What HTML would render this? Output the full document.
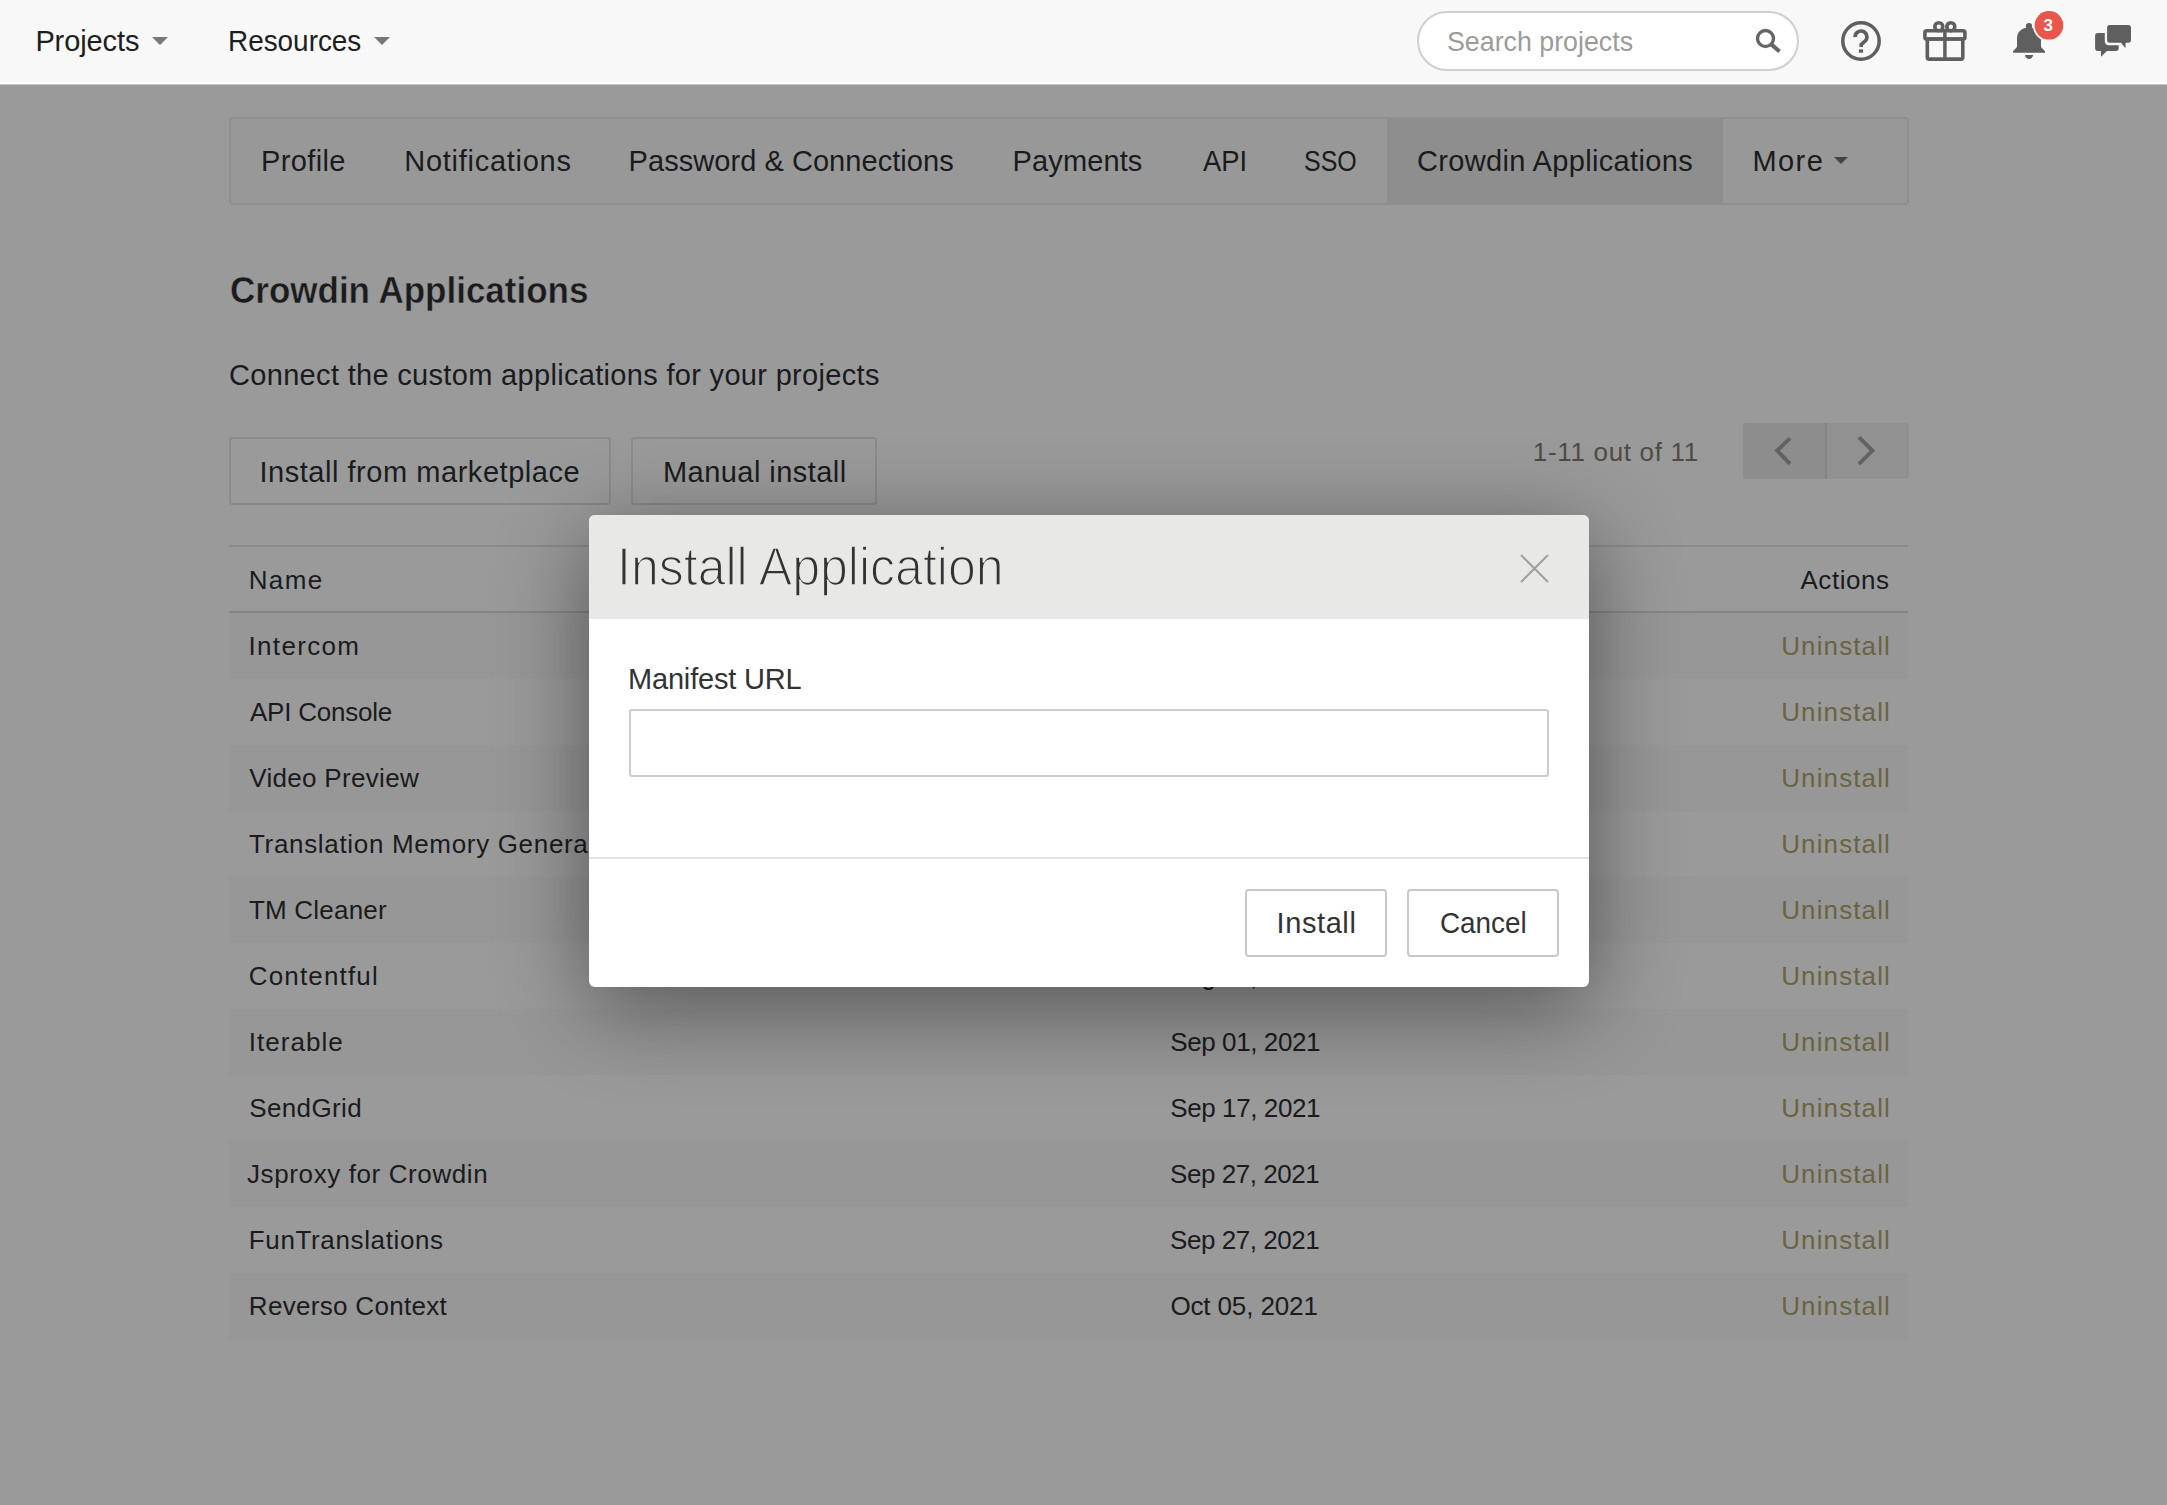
<!DOCTYPE html>
<html><head><meta charset="utf-8">
<style>
html,body{margin:0;padding:0}
body{width:2167px;height:1505px;overflow:hidden;position:relative;background:#9a9a9a;font-family:"Liberation Sans",sans-serif}
.t{position:absolute;white-space:nowrap;line-height:1;font-family:"Liberation Sans",sans-serif}
.b{position:absolute;box-sizing:border-box}
.tri{position:absolute;width:0;height:0;border-left:8px solid transparent;border-right:8px solid transparent;border-top:8px solid #777}
.row{position:absolute;left:229px;width:1679px;height:66px;background:#979797}
</style></head>
<body>
<!-- header -->
<div class="b" style="left:0;top:0;width:2167px;height:82px;background:#f8f8f8"></div>
<div class="b" style="left:0;top:82px;width:2167px;height:2px;background:#fefefe"></div>
<div class="b" style="left:0;top:84px;width:2167px;height:1px;background:#c4c4c4"></div>
<div class="tri" style="left:152px;top:37px"></div>
<div class="tri" style="left:374px;top:37px"></div>
<div class="b" style="left:1417px;top:11px;width:382px;height:60px;border:2px solid #cfcfcf;border-radius:30px;background:#fff"></div>
<svg style="position:absolute;left:1754px;top:27px" width="30" height="28" viewBox="0 0 30 28">
 <circle cx="11.5" cy="11.5" r="8" fill="none" stroke="#666" stroke-width="3.4"/>
 <line x1="17.5" y1="17.5" x2="25.5" y2="24.5" stroke="#666" stroke-width="4.2"/>
</svg>
<svg style="position:absolute;left:1838px;top:18px" width="46" height="46" viewBox="0 0 46 46">
 <circle cx="23" cy="23" r="18.2" fill="none" stroke="#5f5f5f" stroke-width="3.5"/>
 <path d="M17.1 19.2 A5.9 5.9 0 1 1 27.6 22.6 L23.2 26.6 L23.2 28.9" fill="none" stroke="#5f5f5f" stroke-width="3.6"/>
 <rect x="20.9" y="31.4" width="4.2" height="3.3" fill="#5f5f5f"/>
</svg>
<svg style="position:absolute;left:1920px;top:18px" width="50" height="46" viewBox="0 0 50 46">
 <circle cx="18.8" cy="8.7" r="4" fill="none" stroke="#5f5f5f" stroke-width="3.6"/>
 <circle cx="30.8" cy="8.7" r="4" fill="none" stroke="#5f5f5f" stroke-width="3.6"/>
 <rect x="4.9" y="12.8" width="40" height="8.2" rx="1.8" fill="none" stroke="#5f5f5f" stroke-width="3.6"/>
 <rect x="7.3" y="21" width="35.5" height="20.1" rx="1.8" fill="none" stroke="#5f5f5f" stroke-width="3.6"/>
 <line x1="24.9" y1="12" x2="24.9" y2="42" stroke="#5f5f5f" stroke-width="3.5"/>
</svg>
<svg style="position:absolute;left:2005px;top:5px" width="70" height="60" viewBox="0 0 70 60">
 <circle cx="24" cy="21.2" r="3.1" fill="#5f5f5f"/>
 <path d="M24 22.6 C17 22.6 12 26.8 12 33.5 L12 42 L8 46.3 L8 47.8 L40 47.8 L40 46.3 L36 42 L36 33.5 C36 26.8 31 22.6 24 22.6 Z" fill="#5f5f5f"/>
 <path d="M20 50 L28 50 C28 52.4 26.2 53.9 24 53.9 C21.8 53.9 20 52.4 20 50 Z" fill="#5f5f5f"/>
 <circle cx="44" cy="20.3" r="16.2" fill="#f8f8f8"/>
 <circle cx="44" cy="20.3" r="14.3" fill="#e9564b"/>
</svg>
<div class="t" style="left:2043.6px;top:17px;font-size:17px;font-weight:700;color:#fff">3</div>
<svg style="position:absolute;left:2092px;top:22px" width="42" height="38" viewBox="0 0 42 38">
 <path d="M17.6 3 L36.5 3 C37.9 3 39 4.1 39 5.5 L39 18.2 C39 19.6 37.9 20.7 36.5 20.7 L33.7 20.7 L33.4 26.2 L29 20.7 L17.6 20.7 C16.2 20.7 15.1 19.6 15.1 18.2 L15.1 5.5 C15.1 4.1 16.2 3 17.6 3 Z" fill="#5f5f5f"/>
 <path d="M5.6 11.1 L12.8 11.1 L12.8 19.5 C12.8 21.5 14.5 23.2 16.5 23.2 L26.7 23.2 L26.7 26.4 C26.7 27.8 25.6 28.9 24.2 28.9 L14.9 28.9 L9.1 34.7 L8.9 28.9 L5.6 28.9 C4.2 28.9 3.1 27.8 3.1 26.4 L3.1 13.6 C3.1 12.2 4.2 11.1 5.6 11.1 Z" fill="#5f5f5f"/>
</svg>

<!-- tabs -->
<div class="b" style="left:229px;top:117px;width:1680px;height:88px;border:2px solid #8f8f8f;border-radius:4px;background:#989898"></div>
<div class="b" style="left:1387px;top:119px;width:336px;height:84px;background:#8e8e8e"></div>
<div class="tri" style="left:1834px;top:157px;border-left-width:7px;border-right-width:7px;border-top-width:7px;border-top-color:#444"></div>

<!-- buttons -->
<div class="b" style="left:229px;top:437px;width:382px;height:68px;border:2px solid #8a8a8a;border-radius:3px"></div>
<div class="b" style="left:631px;top:437px;width:246px;height:68px;border:2px solid #8a8a8a;border-radius:3px"></div>

<!-- pagination -->
<div class="b" style="left:1743px;top:423px;width:83px;height:56px;background:#8d8d8d;border-radius:3px 0 0 3px"></div>
<div class="b" style="left:1826px;top:423px;width:83px;height:56px;background:#919191;border-radius:0 3px 3px 0"></div>
<div class="b" style="left:1825px;top:423px;width:2px;height:56px;background:#848484"></div>
<svg style="position:absolute;left:1770px;top:435px" width="26" height="32" viewBox="0 0 26 32">
 <polyline points="20,3.4 7.2,15.5 20,28.9" fill="none" stroke="#626262" stroke-width="3.9"/>
</svg>
<svg style="position:absolute;left:1853px;top:435px" width="26" height="32" viewBox="0 0 26 32">
 <polyline points="6,2.4 19.4,15.5 6,29" fill="none" stroke="#626262" stroke-width="3.9"/>
</svg>

<!-- table -->
<div class="b" style="left:229px;top:545px;width:1679px;height:2px;background:#8a8a8a"></div>
<div class="b" style="left:229px;top:611px;width:1679px;height:2px;background:#858585"></div>
<div class="row" style="top:613px"></div>
<div class="row" style="top:745px"></div>
<div class="row" style="top:877px"></div>
<div class="row" style="top:1009px"></div>
<div class="row" style="top:1141px"></div>
<div class="row" style="top:1273px"></div>

<div class="t" style="left:35.4px;top:27.0px;font-size:29px;color:#1e1e1e;letter-spacing:-0.11px">Projects</div>
<div class="t" style="left:227.5px;top:26.8px;font-size:29px;color:#1e1e1e;letter-spacing:0.00px;transform:scaleX(0.9618);transform-origin:0 0">Resources</div>
<div class="t" style="left:1447.0px;top:28.4px;font-size:28px;color:#9b9b9b;letter-spacing:0.00px;transform:scaleX(0.9565);transform-origin:0 0">Search projects</div>
<div class="t" style="left:260.9px;top:147.0px;font-size:29px;color:#1a1b1d;letter-spacing:0.40px">Profile</div>
<div class="t" style="left:404.3px;top:147.0px;font-size:29px;color:#1a1b1d;letter-spacing:0.72px">Notifications</div>
<div class="t" style="left:628.6px;top:147.0px;font-size:29px;color:#1a1b1d;letter-spacing:0.05px">Password &amp; Connections</div>
<div class="t" style="left:1012.6px;top:147.0px;font-size:29px;color:#1a1b1d;letter-spacing:0.11px">Payments</div>
<div class="t" style="left:1202.7px;top:147.0px;font-size:29px;color:#1a1b1d;letter-spacing:0.00px;transform:scaleX(0.9432);transform-origin:0 0">API</div>
<div class="t" style="left:1304.4px;top:147.0px;font-size:29px;color:#1a1b1d;letter-spacing:0.00px;transform:scaleX(0.8610);transform-origin:0 0">SSO</div>
<div class="t" style="left:1417.0px;top:147.0px;font-size:29px;color:#1a1b1d;letter-spacing:0.34px">Crowdin Applications</div>
<div class="t" style="left:1752.4px;top:147.0px;font-size:29px;color:#1a1b1d;letter-spacing:1.47px">More</div>
<div class="t" style="left:229.8px;top:272.4px;font-size:37px;color:#1a1b1d;letter-spacing:0.00px;font-weight:700;-webkit-text-stroke:0.5px #9a9a9a;transform:scaleX(0.9460);transform-origin:0 0">Crowdin Applications</div>
<div class="t" style="left:229.0px;top:360.6px;font-size:29px;color:#1a1b1d;letter-spacing:0.32px">Connect the custom applications for your projects</div>
<div class="t" style="left:259.4px;top:457.5px;font-size:29px;color:#1a1b1d;letter-spacing:0.54px">Install from marketplace</div>
<div class="t" style="left:663.0px;top:457.5px;font-size:29px;color:#1a1b1d;letter-spacing:0.45px">Manual install</div>
<div class="t" style="left:1532.8px;top:438.8px;font-size:26px;color:#4d4c43;letter-spacing:0.68px">1-11 out of 11</div>
<div class="t" style="left:248.7px;top:566.8px;font-size:26px;color:#1a1b1d;letter-spacing:1.40px">Name</div>
<div class="t" style="left:1800.5px;top:566.9px;font-size:26px;color:#1a1b1d;letter-spacing:0.53px">Actions</div>
<div class="t" style="left:248.5px;top:633.0px;font-size:26px;color:#1a1b1d;letter-spacing:1.34px">Intercom</div>
<div class="t" style="left:250.0px;top:699.0px;font-size:26px;color:#1a1b1d;letter-spacing:-0.24px">API Console</div>
<div class="t" style="left:249.2px;top:765.0px;font-size:26px;color:#1a1b1d;letter-spacing:0.32px">Video Preview</div>
<div class="t" style="left:249.0px;top:831.0px;font-size:26px;color:#1a1b1d;letter-spacing:0.67px">Translation Memory Generator</div>
<div class="t" style="left:249.0px;top:897.0px;font-size:26px;color:#1a1b1d;letter-spacing:0.20px">TM Cleaner</div>
<div class="t" style="left:248.8px;top:963.0px;font-size:26px;color:#1a1b1d;letter-spacing:1.16px">Contentful</div>
<div class="t" style="left:248.8px;top:1029.0px;font-size:26px;color:#1a1b1d;letter-spacing:1.03px">Iterable</div>
<div class="t" style="left:249.2px;top:1095.0px;font-size:26px;color:#1a1b1d;letter-spacing:0.37px">SendGrid</div>
<div class="t" style="left:247.0px;top:1161.0px;font-size:26px;color:#1a1b1d;letter-spacing:0.61px">Jsproxy for Crowdin</div>
<div class="t" style="left:248.8px;top:1227.0px;font-size:26px;color:#1a1b1d;letter-spacing:0.63px">FunTranslations</div>
<div class="t" style="left:248.8px;top:1293.0px;font-size:26px;color:#1a1b1d;letter-spacing:0.31px">Reverso Context</div>
<div class="t" style="left:1171.2px;top:963.0px;font-size:26px;color:#1a1b1d;letter-spacing:0.00px;transform:scaleX(0.9630);transform-origin:0 0">Aug 30, 2021</div>
<div class="t" style="left:1170.2px;top:1029.0px;font-size:26px;color:#1a1b1d;letter-spacing:-0.40px">Sep 01, 2021</div>
<div class="t" style="left:1170.2px;top:1095.0px;font-size:26px;color:#1a1b1d;letter-spacing:-0.40px">Sep 17, 2021</div>
<div class="t" style="left:1170.0px;top:1161.0px;font-size:26px;color:#1a1b1d;letter-spacing:-0.45px">Sep 27, 2021</div>
<div class="t" style="left:1170.0px;top:1227.0px;font-size:26px;color:#1a1b1d;letter-spacing:-0.45px">Sep 27, 2021</div>
<div class="t" style="left:1170.4px;top:1293.0px;font-size:26px;color:#1a1b1d;letter-spacing:-0.13px">Oct 05, 2021</div>
<div class="t" style="left:1781.2px;top:633.0px;font-size:26px;color:#6a6440;letter-spacing:1.12px">Uninstall</div>
<div class="t" style="left:1781.2px;top:699.0px;font-size:26px;color:#6a6440;letter-spacing:1.12px">Uninstall</div>
<div class="t" style="left:1781.2px;top:765.0px;font-size:26px;color:#6a6440;letter-spacing:1.12px">Uninstall</div>
<div class="t" style="left:1781.2px;top:831.0px;font-size:26px;color:#6a6440;letter-spacing:1.12px">Uninstall</div>
<div class="t" style="left:1781.2px;top:897.0px;font-size:26px;color:#6a6440;letter-spacing:1.12px">Uninstall</div>
<div class="t" style="left:1781.2px;top:963.0px;font-size:26px;color:#6a6440;letter-spacing:1.12px">Uninstall</div>
<div class="t" style="left:1781.2px;top:1029.0px;font-size:26px;color:#6a6440;letter-spacing:1.12px">Uninstall</div>
<div class="t" style="left:1781.2px;top:1095.0px;font-size:26px;color:#6a6440;letter-spacing:1.12px">Uninstall</div>
<div class="t" style="left:1781.2px;top:1161.0px;font-size:26px;color:#6a6440;letter-spacing:1.12px">Uninstall</div>
<div class="t" style="left:1781.2px;top:1227.0px;font-size:26px;color:#6a6440;letter-spacing:1.12px">Uninstall</div>
<div class="t" style="left:1781.2px;top:1293.0px;font-size:26px;color:#6a6440;letter-spacing:1.12px">Uninstall</div>

<!-- modal -->
<div class="b" style="left:589px;top:515px;width:1000px;height:472px;border-radius:6px;background:#fff;box-shadow:0 20px 90px rgba(0,0,0,.45);overflow:hidden">
  <div class="b" style="left:0;top:0;width:1000px;height:104px;background:#e8e8e6"></div>
  <div class="b" style="left:0;top:342px;width:1000px;height:2px;background:#e2e2e2"></div>
</div>
<svg style="position:absolute;left:1518px;top:552px" width="33" height="33" viewBox="0 0 33 33">
 <path d="M3 3 L30 30 M30 3 L3 30" stroke="#a0a0a0" stroke-width="2.1" fill="none"/>
</svg>
<div class="b" style="left:629px;top:709px;width:920px;height:68px;border:2px solid #cccccc;border-radius:3px;background:#fff"></div>
<div class="b" style="left:1245px;top:889px;width:142px;height:68px;border:2px solid #c8c8c8;border-radius:4px;background:#fff"></div>
<div class="b" style="left:1407px;top:889px;width:152px;height:68px;border:2px solid #c8c8c8;border-radius:4px;background:#fff"></div>
<div class="t" style="left:617.0px;top:540.2px;font-size:53px;color:#333333;letter-spacing:0.00px;-webkit-text-stroke:1.6px #e8e8e6;transform:scaleX(0.9439);transform-origin:0 0">Install Application</div>
<div class="t" style="left:628.0px;top:665.1px;font-size:29px;color:#333333;letter-spacing:-0.18px">Manifest URL</div>
<div class="t" style="left:1276.5px;top:909.0px;font-size:29px;color:#333333;letter-spacing:0.60px">Install</div>
<div class="t" style="left:1439.9px;top:909.0px;font-size:29px;color:#333333;letter-spacing:0.00px;transform:scaleX(0.9609);transform-origin:0 0">Cancel</div>
</body></html>
